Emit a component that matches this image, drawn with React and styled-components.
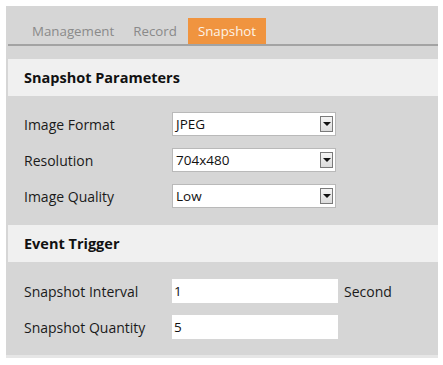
import styled, { createGlobalStyle } from "styled-components";

const GlobalStyle = createGlobalStyle`
  html, body { margin: 0; padding: 0; background: #ffffff; }
  body { font-family: "Open Sans", "Liberation Sans", sans-serif; }
`;

const Page = styled.div`
  padding: 6px 5px 0 6px;
  width: 443px;
  box-sizing: border-box;
`;

const Panel = styled.div`
  background: #d6d6d6;
  height: 352px;
  padding: 12px 0 0 2px;
  box-sizing: border-box;
  border-bottom: 3px solid #e6e6e6;
`;

const TabBar = styled.div`
  display: flex;
  align-items: flex-end;
  padding-left: 16px;
  height: 26px;
  border-bottom: 2px solid #a3a3a3;
`;

const Tab = styled.div`
  height: 26px;
  display: flex;
  align-items: center;
  padding: 0 ${(p) => (p.$pad || 10)}px;
  font-size: 13.3px;
  color: ${(p) => (p.$active ? "#fdf3e7" : "#8a8a8a")};
  background: ${(p) => (p.$active ? "#f0943f" : "transparent")};
`;

const SectionHeader = styled.div`
  background: #f0f0f0;
  height: 37px;
  display: flex;
  align-items: center;
  padding-left: 16px;
  margin-top: ${(p) => p.$top}px;
  font-size: 14.5px;
  font-weight: 700;
  color: #111;
`;

const Fields = styled.div`
  display: flex;
  flex-direction: column;
  gap: 12px;
  padding: ${(p) => p.$top}px 0 0 16px;
`;

const Row = styled.div`
  display: flex;
  align-items: center;
  height: 24px;
`;

const Label = styled.div`
  width: 148px;
  font-size: 14px;
  color: #1a1a1a;
`;

const Select = styled.div`
  width: 164px;
  height: 24px;
  box-sizing: border-box;
  background: #fff;
  border: 1px solid #b9b9b9;
  display: flex;
  align-items: center;
  justify-content: space-between;
  padding: 0 2px 0 3px;
  font-size: 13.5px;
  color: #111;
`;

const Arrow = styled.div`
  width: 13px;
  height: 16px;
  box-sizing: border-box;
  border: 1px solid #7a7a7a;
  background: linear-gradient(#f4f4f4, #dcdcdc);
  display: flex;
  align-items: center;
  justify-content: center;
  &::after {
    content: "";
    border-left: 4px solid transparent;
    border-right: 4px solid transparent;
    border-top: 4px solid #111;
  }
`;

const Input = styled.div`
  width: 166px;
  height: 24px;
  box-sizing: border-box;
  background: #fff;
  display: flex;
  align-items: center;
  padding-left: 2px;
  font-size: 13.5px;
  color: #111;
`;

const Unit = styled.div`
  margin-left: 6px;
  font-size: 14px;
  color: #1a1a1a;
`;

export default function App() {
  return (
    <Page>
      <GlobalStyle />
      <Panel>
        <TabBar>
          <Tab $pad={8}>Management</Tab>
          <Tab $pad={11}>Record</Tab>
          <Tab $active $pad={10}>Snapshot</Tab>
        </TabBar>
        <SectionHeader $top={13}>Snapshot Parameters</SectionHeader>
        <Fields $top={16}>
          <Row>
            <Label>Image Format</Label>
            <Select>JPEG<Arrow /></Select>
          </Row>
          <Row>
            <Label>Resolution</Label>
            <Select>704x480<Arrow /></Select>
          </Row>
          <Row>
            <Label>Image Quality</Label>
            <Select>Low<Arrow /></Select>
          </Row>
        </Fields>
        <SectionHeader $top={17}>Event Trigger</SectionHeader>
        <Fields $top={17}>
          <Row>
            <Label>Snapshot Interval</Label>
            <Input>1</Input>
            <Unit>Second</Unit>
          </Row>
          <Row>
            <Label>Snapshot Quantity</Label>
            <Input>5</Input>
          </Row>
        </Fields>
      </Panel>
    </Page>
  );
}
